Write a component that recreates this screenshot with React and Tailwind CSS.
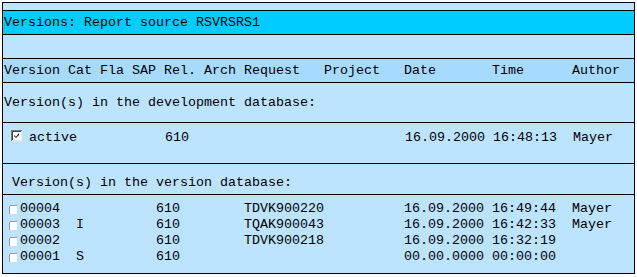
import React from 'react';

const versions = [
  { nr: '00004', cat: '', rel: '610', req: 'TDVK900220', date: '16.09.2000', time: '16:49:44', author: 'Mayer' },
  { nr: '00003', cat: 'I', rel: '610', req: 'TQAK900043', date: '16.09.2000', time: '16:42:33', author: 'Mayer' },
  { nr: '00002', cat: '', rel: '610', req: 'TDVK900218', date: '16.09.2000', time: '16:32:19', author: '' },
  { nr: '00001', cat: 'S', rel: '610', req: '', date: '00.00.0000', time: '00:00:00', author: '' },
];

function CheckedBox() {
  return (
    <svg width="11" height="11" viewBox="0 0 11 11" className="shrink-0 mt-[2px]">
      <rect x="0" y="0" width="11" height="11" fill="#808080" />
      <rect x="1" y="1" width="10" height="10" fill="#e8e8e8" />
      <rect x="1" y="1" width="9" height="9" fill="#404040" />
      <rect x="2" y="2" width="8" height="8" fill="#ffffff" />
      <path d="M3 5 L5 7 L8 3 L8 5 L5 8 L3 6 Z" fill="#000" />
    </svg>
  );
}

function SmallBox() {
  return (
    <svg width="8" height="9" viewBox="0 0 8 9" className="shrink-0">
      <rect x="0" y="0" width="8" height="9" fill="#ffffff" />
      <path d="M0 9 L0 2 Q0 0 2 0 L8 0 L8 1 L2 1 Q1 1 1 2 L1 9 Z" fill="#9a9a9a" />
    </svg>
  );
}

export default function App() {
  return (
    <div className="w-[637px] h-[277px] bg-white p-[2px] font-['Liberation_Mono',monospace] text-[13.333px] text-black">
      <div className="w-[633px] h-[272px] border border-black bg-[#bde4ff] flex flex-col">
        {/* top strip */}
        <div className="h-[8px] border-b border-black shrink-0" />

        {/* title */}
        <div className="h-[24px] bg-[#00ccff] border-b border-black shrink-0 flex items-center pl-[1px] pt-[1px] whitespace-pre">
          Versions: Report source RSVRSRS1
        </div>

        {/* empty toolbar area */}
        <div className="h-[24px] border-b border-black shrink-0" />

        {/* column header */}
        <div className="h-[24px] bg-[#a6dbff] border-b border-black shrink-0 flex items-center pl-[1px] whitespace-pre">
          <span className="w-[320px] shrink-0">Version Cat Fla SAP Rel. Arch Request</span>
          <span className="w-[80px] shrink-0">Project</span>
          <span className="w-[88px] shrink-0">Date</span>
          <span className="w-[80px] shrink-0">Time</span>
          <span>Author</span>
        </div>

        {/* development database */}
        <div className="h-[40px] border-b border-black shrink-0 flex items-center pl-[1px] pt-[1px] whitespace-pre">
          Version(s) in the development database:
        </div>
        <div className="h-[41px] border-b border-black shrink-0 flex items-start pt-[5px] pl-[8px] whitespace-pre">
          <CheckedBox />
          <span className="w-[136px] shrink-0 ml-[7px]">active</span>
          <span className="w-[240px] shrink-0">610</span>
          <span className="w-[88px] shrink-0">16.09.2000</span>
          <span className="w-[80px] shrink-0">16:48:13</span>
          <span>Mayer</span>
        </div>

        {/* version database */}
        <div className="h-[31px] border-b border-black shrink-0 flex items-end pb-[1px] pl-[9px] whitespace-pre">
          Version(s) in the version database:
        </div>
        <div className="flex flex-col pt-[6px]">
          {versions.map((v) => (
            <div key={v.nr} className="h-[16px] flex items-center pl-[6px] whitespace-pre">
              <SmallBox />
              <span className="w-[56px] shrink-0 ml-[3px]">{v.nr}</span>
              <span className="w-[80px] shrink-0">{v.cat}</span>
              <span className="w-[88px] shrink-0">{v.rel}</span>
              <span className="w-[160px] shrink-0">{v.req}</span>
              <span className="w-[88px] shrink-0">{v.date}</span>
              <span className="w-[80px] shrink-0">{v.time}</span>
              <span>{v.author}</span>
            </div>
          ))}
        </div>
      </div>
    </div>
  );
}
